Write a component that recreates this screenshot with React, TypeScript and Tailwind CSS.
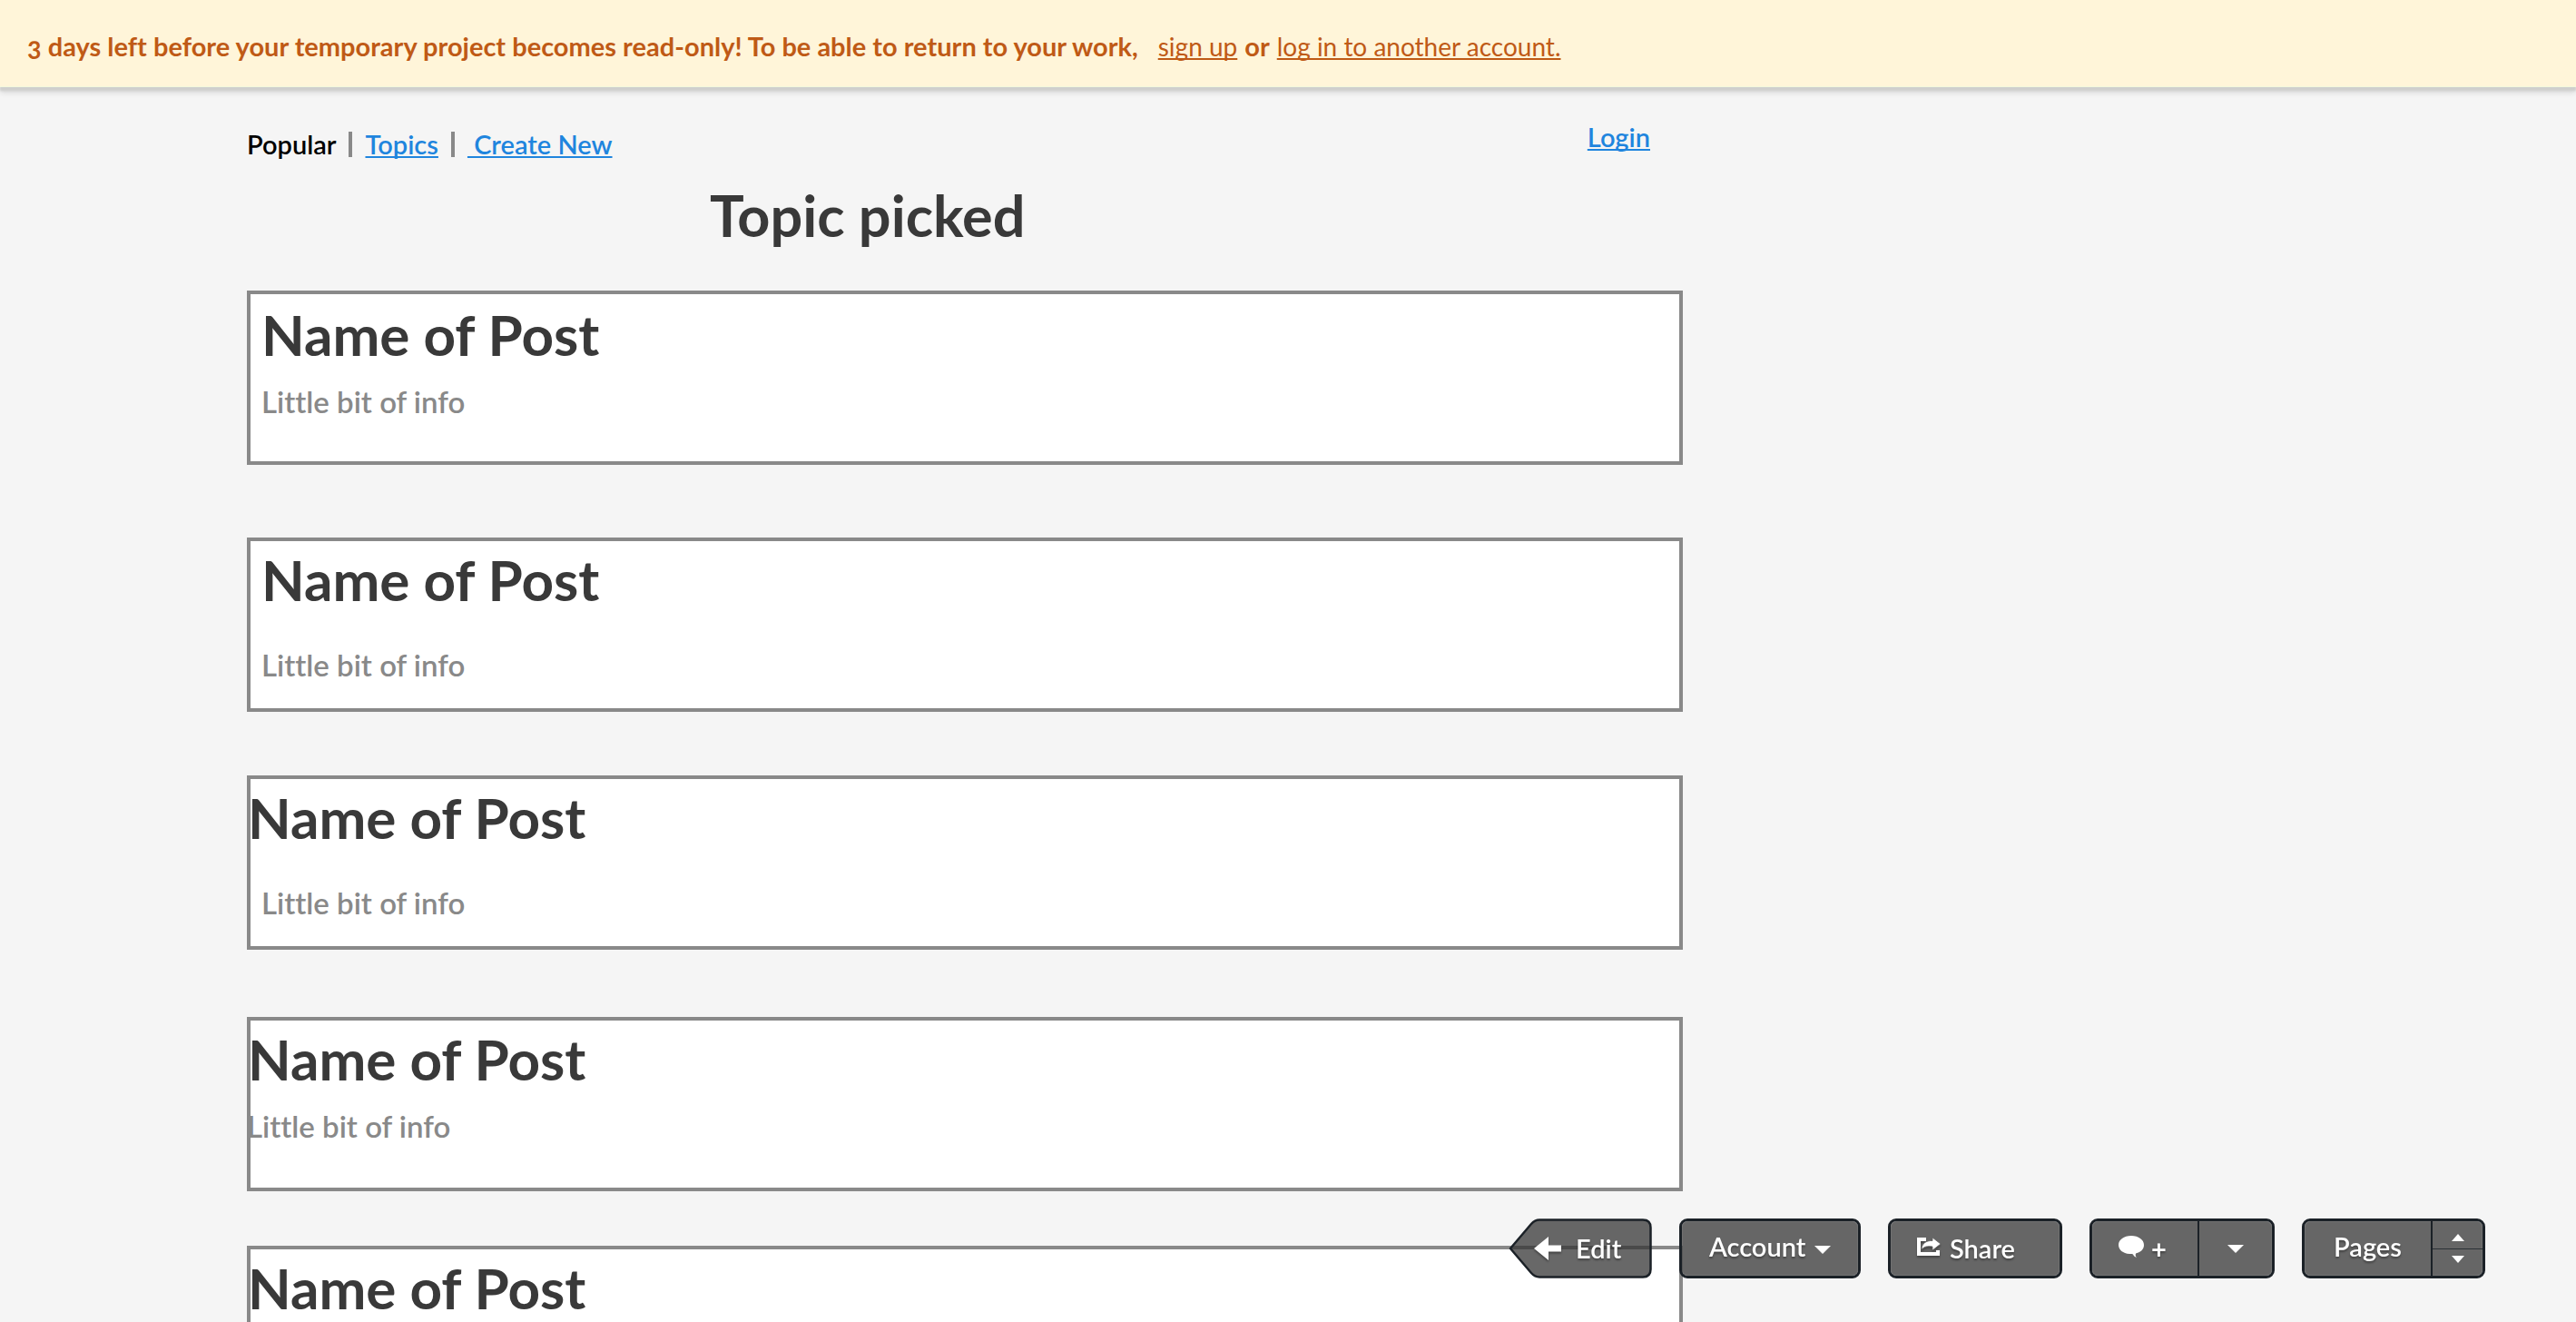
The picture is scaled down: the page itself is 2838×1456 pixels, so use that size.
type Post = { top: string; title: string; info: string };

const posts: Post[] = [
  { top: "mt-[47px]", title: "pt-2 pl-3", info: "mt-[18px] pl-3" },
  { top: "mt-20", title: "pt-1.5 pl-3", info: "mt-[38px] pl-3" },
  { top: "mt-[70px]", title: "pt-1.5 -ml-[3px]", info: "mt-[38px] pl-3" },
  { top: "mt-[74px]", title: "pt-1.5 -ml-[3px]", info: "mt-[18px] -ml-1" },
  { top: "mt-[60px]", title: "pt-1.5 -ml-[3px]", info: "mt-[18px] -ml-1" },
];

const panel =
  "flex h-[66px] overflow-hidden rounded-[9px] border-3 border-[#1b2127] bg-[#363636]/75 bg-clip-padding shadow-[inset_0_0_0_1px_rgba(255,255,255,0.08)]";
const drop = "drop-shadow-[0_2px_1px_rgba(0,0,0,0.35)]";
const link = "underline decoration-2 underline-offset-2";

function Caret({ up = false, small = false }: { up?: boolean; small?: boolean }) {
  return (
    <svg viewBox="0 0 18 9" className={small ? "h-2 w-3.5" : "h-[9px] w-[18px]"} preserveAspectRatio="none" fill="white" aria-hidden="true">
      <path d={up ? "M0 9 9 0l9 9z" : "M0 0h18L9 9z"} />
    </svg>
  );
}

function PostCard({ post }: { post: Post }) {
  return (
    <article className={`min-h-48 border-4 border-[#898989] bg-white ${post.top}`}>
      <h2 className={`text-[62px] leading-[72px] font-bold text-[#393939] ${post.title}`}>Name of Post</h2>
      <p className={`text-[33px] leading-10 font-semibold text-[#898989] ${post.info}`}>Little bit of info</p>
    </article>
  );
}

export default function App() {
  return (
    <div className="h-screen overflow-hidden bg-[#f5f5f5] font-['Lato',sans-serif] text-[29px] leading-9 [font-variant-ligatures:none] [text-decoration-skip-ink:none]">
      <div className="relative flex items-baseline border-b border-[#f3f8dc] bg-[#fff5d9] pt-[33px] pb-[26px] pl-[30px] text-[#bf5a16] shadow-[0_4px_2px_#cfcfcd,0_6px_6px_rgba(0,0,0,0.12)]">
        <strong className="font-bold oldstyle-nums">
          3 days left before your temporary project becomes read-only! To be able to return to your work,
        </strong>
        <a href="#signup" className={`ml-[22px] text-[28px] ${link}`}>sign up</a>
        <strong className="mx-2 font-bold">or</strong>
        <a href="#login" className={`text-[28px] ${link}`}>log in to another account.</a>
      </div>

      <main className="ml-[272px] max-w-[1582px]">
        <div className="flex items-start justify-between pt-[37px] pr-9 font-semibold">
          <nav className="mt-2 flex items-center text-[#1f85de]">
            <span className="text-black">Popular</span>
            <span className="mx-3.5 h-7 w-1 bg-[#898989]" />
            <a href="#topics" className={link}>Topics</a>
            <span className="mx-3.5 h-7 w-1 bg-[#898989]" />
            <a href="#new" className={`whitespace-pre ${link}`}> Create New</a>
          </nav>
          <a href="#login" className={`text-[#1f85de] ${link}`}>Login</a>
        </div>

        <h1 className="mt-6 pl-[510px] text-[63px] leading-[72px] font-bold text-[#393939]">Topic picked</h1>

        {posts.map((post, i) => (
          <PostCard key={i} post={post} />
        ))}
      </main>

      <div className="fixed right-[100px] bottom-12 flex gap-[30px] font-semibold text-white">
        <button type="button" className="relative flex h-[66px] w-[158px] items-center gap-4 pl-7">
          <svg viewBox="0 0 158 66" className="absolute inset-0 size-full" aria-hidden="true">
            <path
              d="M2 33 25 6Q29 1.5 34 1.5H148Q156.500 1.500 156.500 10V56Q156.500 64.500 148 64.500H34Q29 64.500 25 60Z"
              fill="#363636"
              fillOpacity="0.75"
              stroke="#1b2127"
              strokeWidth="2.500"
              strokeLinejoin="round"
            />
          </svg>
          <svg viewBox="0 0 30 26" className={`relative h-[26px] w-[30px] ${drop}`} fill="white" aria-hidden="true">
            <path d="M0 13 16 0v9.500h14v7H16V26z" />
          </svg>
          <span className={`relative ${drop}`}>Edit</span>
        </button>

        <button type="button" className={`${panel} w-[200px] items-center gap-2.5 pb-1 pl-[30px]`}>
          <span className={drop}>Account</span>
          <span className="pt-1.5"><Caret /></span>
        </button>

        <button type="button" className={`${panel} w-48 items-center gap-2.5 pl-[29px]`}>
          <svg viewBox="0 0 26 20" className={`mb-1 h-5 w-[26px] ${drop}`} aria-hidden="true">
            <path d="M10 2H2v16h21v-4" fill="none" stroke="white" strokeWidth="4" />
            <path d="M17 0 26 7l-9 7v-4C11 9 8 10 5 13 5 7 10 3 17 3.500z" fill="white" stroke="#666" strokeWidth="0.800" />
          </svg>
          <span className={drop}>Share</span>
        </button>

        <div className={`${panel} w-[204px]`}>
          <button type="button" aria-label="Add comment" className="flex w-[116px] items-center gap-2 pl-[29px]">
            <svg viewBox="0 0 28 24" className="mb-1 h-6 w-7" fill="white" aria-hidden="true">
              <path d="M14 0C6 0 0 4.500 0 10s5 9.500 12 10c2 0 3.500 0 4 .5.500 1.500 1.500 2.500 4 3.500-1.500-1.500-1.500-3-1-4.500C25 18 28 14.500 28 10c0-5.500-6-10-14-10z" />
            </svg>
            <span className={`font-bold ${drop}`}>+</span>
          </button>
          <button type="button" aria-label="Comment options" className="flex flex-1 items-center justify-center border-l-2 border-[#1b2127]">
            <Caret />
          </button>
        </div>

        <div className={`${panel} w-[202px]`}>
          <button type="button" className="w-[139px] pb-1">
            <span className={drop}>Pages</span>
          </button>
          <div className="flex flex-1 flex-col border-l-2 border-[#1b2127]">
            <button type="button" aria-label="Previous page" className="flex flex-1 items-center justify-center border-b border-[#2b3135] pt-1.5">
              <Caret up small />
            </button>
            <button type="button" aria-label="Next page" className="flex flex-1 items-center justify-center pb-1.5">
              <Caret small />
            </button>
          </div>
        </div>
      </div>
    </div>
  );
}
